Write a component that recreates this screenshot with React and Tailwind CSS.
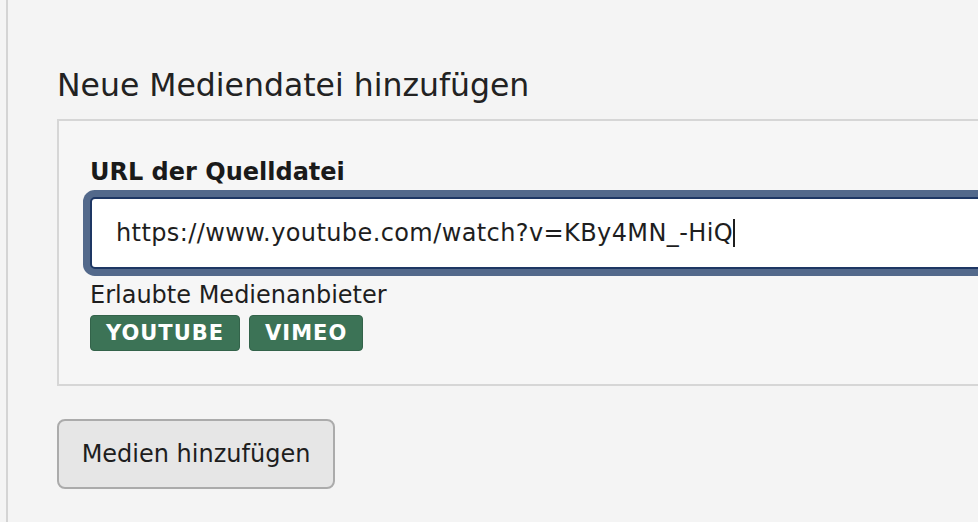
import React from "react";

const providers = ["YOUTUBE", "VIMEO"];

const App = () => {
  return (
    <div className="h-[522px] w-full overflow-hidden bg-[#f4f4f4] pl-[6px] font-['DejaVu_Sans',Verdana,sans-serif] text-[#1e1e1e]">
      <div className="h-full w-[1100px] border-l-2 border-[#d4d4d4] pl-[49px] pt-[69px]">
        {/* Heading */}
        <h2 className="text-[31.5px] leading-[32px] font-normal text-[#222]">
          Neue Mediendatei hinzufügen
        </h2>

        {/* Fieldset */}
        <div className="mt-[18px] w-[1000px] border-2 border-[#d6d6d6] bg-[#f6f6f6] pl-[31px] pt-[39px] pb-[33px]">
          <label className="block text-[24px] leading-[24px] font-bold text-[#1a1a1a]">
            URL der Quelldatei
          </label>

          <div className="mt-[13px] flex h-[72px] w-[920px] items-center rounded-[5px] border-2 border-[#1e3764] bg-white pl-[24px] shadow-[0_0_0_7px_#53698b]">
            <span className="text-[24px] leading-[28px] tracking-[0.4px] text-[#1e1e1e]">
              https://www.youtube.com/watch?v=KBy4MN_-HiQ
            </span>
            <span className="inline-block h-[28px] w-[2px] bg-[#1e1e1e]" />
          </div>

          <p className="mt-[12px] text-[24px] leading-[28px]">Erlaubte Medienanbieter</p>

          <div className="mt-[6px] flex gap-[9px]">
            {providers.map((name) => (
              <span
                key={name}
                className="flex h-[36px] items-center rounded-[4px] border border-[#33634a] bg-[#3c7356] px-[15px] pt-[2px] text-[21px] font-bold tracking-[1px] text-white"
              >
                {name}
              </span>
            ))}
          </div>
        </div>

        {/* Submit */}
        <button className="mt-[33px] flex h-[70px] w-[278px] items-center justify-center rounded-[8px] border-2 border-[#ababab] bg-[#e6e6e6] text-[24px] text-[#1e1e1e]">
          Medien hinzufügen
        </button>
      </div>
    </div>
  );
};

export default App;
